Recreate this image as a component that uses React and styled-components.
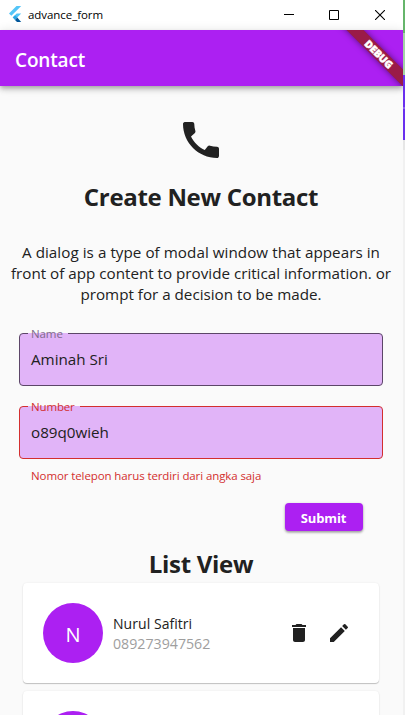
import React from "react";
import styled, { createGlobalStyle } from "styled-components";
import { MdCall, MdDelete, MdEdit } from "react-icons/md";

const GlobalStyle = createGlobalStyle`
  * { box-sizing: border-box; }
  html, body { margin: 0; padding: 0; overflow: hidden; }
  body { font-family: "Open Sans", "Noto Sans", sans-serif; color: #212121; }
`;

const purple = "#ac20f2";

const Screen = styled.div`
  display: flex;
  width: 405px;
  height: 715px;
  overflow: hidden;
`;

const Window = styled.main`
  flex: none;
  display: flex;
  flex-direction: column;
  width: 403px;
  height: 715px;
  overflow: hidden;
  background: #fafafa;
`;

const Backdrop = styled.div`
  flex: none;
  width: 2px;
  height: 715px;
  background: linear-gradient(
    #66b56b 0 33px,
    #a3d3a5 33px 75px,
    #6a30ee 75px 107px,
    #8d62f2 107px 109px,
    #6a30ee 109px 140px,
    #e6e6e6 140px 150px,
    #f1f1f1 150px
  );
`;

const TitleBar = styled.header`
  flex: none;
  display: flex;
  align-items: center;
  height: 30px;
  padding-left: 8px;
  background: #fff;
`;

const WindowTitle = styled.span`
  flex: 1;
  margin-left: 6px;
  font-size: 11.5px;
  line-height: 16px;
  letter-spacing: -0.06px;
  color: #000;
`;

const WindowControls = styled.div`
  display: flex;
  svg { display: block; margin-right: 35px; }
  svg:last-child { margin: 0 18px 0 1px; }
`;

const AppBar = styled.div`
  flex: none;
  position: relative;
  z-index: 1;
  display: flex;
  align-items: center;
  height: 56px;
  padding-left: 15px;
  background: ${purple};
  box-shadow: 0 2px 4px -1px rgba(0, 0, 0, 0.2), 0 4px 5px rgba(0, 0, 0, 0.14),
    0 1px 10px rgba(0, 0, 0, 0.12);
`;

const AppTitle = styled.h1`
  margin: 0;
  padding-top: 3px;
  font-size: 19px;
  font-weight: 600;
  line-height: 26px;
  letter-spacing: -0.15px;
  color: #fff;
`;

const BannerClip = styled.div`
  position: absolute;
  inset: 0 0 0 auto;
  width: 80px;
  overflow: hidden;
`;

const Banner = styled.div`
  position: absolute;
  left: -4px;
  top: 17.5px;
  width: 120px;
  height: 12px;
  transform: rotate(45deg);
  background: #9a1b48;
  box-shadow: 0 0 6px rgba(0, 0, 0, 0.5);
  color: #fff;
  font-size: 10.2px;
  font-weight: 800;
  line-height: 12px;
  text-align: center;
  -webkit-text-stroke: 0.5px #fff;
`;

const Content = styled.section`
  display: flex;
  flex-direction: column;
  width: 402px;
  padding-top: 30px;
`;

const HeroIcon = styled(MdCall)`
  align-self: center;
  flex: none;
  width: 48px;
  height: 48px;
  color: #212121;
`;

const Heading = styled.h2`
  flex: none;
  margin: 16px 0 0;
  font-size: 24px;
  font-weight: 700;
  line-height: 34px;
  letter-spacing: -0.3px;
  text-align: center;
`;

const Description = styled.p`
  margin: 28px 0 0;
  font-size: 15.2px;
  font-weight: 400;
  line-height: 21px;
  text-align: center;
  span { display: block; white-space: nowrap; }
  span:first-child { letter-spacing: 0.05px; }
`;

const Form = styled.form`
  display: flex;
  flex-direction: column;
  gap: 20px;
  margin: 28px 19px 0 19px;
`;

const Field = styled.div`
  position: relative;
  height: 53px;
  padding: 14px 11px;
  border: 1px solid ${(p) => (p.$error ? "#d32f2f" : "#5c4668")};
  border-radius: 4px;
  background: #e1b4f8;
`;

const FieldLabel = styled.label`
  position: absolute;
  left: 8px;
  top: -9px;
  padding: 0 5px 0 3px;
  font-size: 11.5px;
  line-height: 18px;
  letter-spacing: ${(p) => p.$track}px;
  color: ${(p) => (p.$error ? "#d32f2f" : "#806a8b")};
  isolation: isolate;
  &::before {
    content: "";
    position: absolute;
    z-index: -1;
    left: 0;
    right: 0;
    top: 8px;
    height: 1px;
    background: #e1b4f8;
  }
`;

const FieldValue = styled.div`
  font-size: 15.2px;
  font-weight: 400;
  line-height: 23px;
  color: #212121;
`;

const ErrorText = styled.div`
  margin: -11px 0 -1px 12px;
  font-size: 11.5px;
  line-height: 16px;
  letter-spacing: -0.1px;
  color: #d32f2f;
`;

const SubmitButton = styled.button`
  align-self: flex-end;
  width: 78px;
  height: 28px;
  margin-right: 20px;
  padding: 2px 1px 0 0;
  border: 0;
  border-radius: 4px;
  background: ${purple};
  box-shadow: 0 1px 3px rgba(0, 0, 0, 0.3), 0 2px 2px rgba(0, 0, 0, 0.14);
  color: #fff;
  font: 700 13px/26px "Open Sans", sans-serif;
  letter-spacing: -0.1px;
`;

const List = styled.ul`
  display: flex;
  flex-direction: column;
  gap: 8px;
  margin: 2px 23px 0 23px;
  padding: 0;
  list-style: none;
`;

const Card = styled.li`
  flex: none;
  display: flex;
  align-items: center;
  height: 100px;
  padding: 0 28px 0 20px;
  border-radius: 4px;
  background: #fff;
  box-shadow: 0 1px 1px rgba(0, 0, 0, 0.22), 0 0 2px rgba(0, 0, 0, 0.08);
`;

const Avatar = styled.div`
  width: 60px;
  height: 60px;
  padding-top: 2px;
  border-radius: 50%;
  background: ${purple};
  color: #fff;
  font-size: 20px;
  line-height: 60px;
  text-align: center;
`;

const Person = styled.div`
  flex: 1;
  margin-left: 10px;
  padding-top: 2px;
`;

const PersonName = styled.div`
  font-size: 14px;
  line-height: 20px;
  letter-spacing: 0.05px;
`;

const PersonPhone = styled.div`
  font-size: 14.2px;
  font-weight: 400;
  line-height: 20px;
  color: #9e9e9e;
`;

const CardActions = styled.div`
  display: flex;
  gap: 16px;
  svg { width: 24px; height: 24px; color: #212121; }
`;

function FlutterLogo() {
  return (
    <svg width="14" height="18" viewBox="0 0 14 18">
      <path d="M8.5 0H13.2L3.4 9.8 1 7.5z" fill="#54c5f8" />
      <path d="M8.7 7.6H13.2L9.2 11.6H4.7z" fill="#54c5f8" />
      <path d="M4.7 11.6l2.3-2.3L9.3 11.6 7 13.9z" fill="#29a5e5" />
      <path d="M7 13.9L9.3 11.6l3.9 4.4H9z" fill="#01579b" />
    </svg>
  );
}

function Contact({ initial, name, phone }) {
  return (
    <Card>
      <Avatar>{initial}</Avatar>
      <Person>
        <PersonName>{name}</PersonName>
        <PersonPhone>{phone}</PersonPhone>
      </Person>
      <CardActions>
        <MdDelete />
        <MdEdit />
      </CardActions>
    </Card>
  );
}

export default function App() {
  return (
    <Screen>
      <GlobalStyle />
      <Window>
        <TitleBar>
          <FlutterLogo />
          <WindowTitle>advance_form</WindowTitle>
          <WindowControls>
            <svg width="10" height="10"><path d="M0 4.5h10" stroke="#000" /></svg>
            <svg width="10" height="10"><path d="M.5.5h9v9h-9z" fill="none" stroke="#000" /></svg>
            <svg width="10" height="10"><path d="M0 0l10 10M10 0L0 10" stroke="#000" strokeWidth="1.1" /></svg>
          </WindowControls>
        </TitleBar>
        <AppBar>
          <AppTitle>Contact</AppTitle>
          <BannerClip><Banner>DEBUG</Banner></BannerClip>
        </AppBar>
        <Content>
          <HeroIcon />
          <Heading>Create New Contact</Heading>
          <Description>
            <span>A dialog is a type of modal window that appears in</span>
            <span>front of app content to provide critical information. or</span>
            <span>prompt for a decision to be made.</span>
          </Description>
          <Form>
            <Field>
              <FieldLabel $track={-0.1}>Name</FieldLabel>
              <FieldValue>Aminah Sri</FieldValue>
            </Field>
            <Field $error>
              <FieldLabel $error $track={-0.15}>Number</FieldLabel>
              <FieldValue>o89q0wieh</FieldValue>
            </Field>
            <ErrorText>Nomor telepon harus terdiri dari angka saja</ErrorText>
            <SubmitButton type="button">Submit</SubmitButton>
          </Form>
          <Heading>List View</Heading>
          <List>
            <Contact initial="N" name="Nurul Safitri" phone="089273947562" />
            <Contact />
          </List>
        </Content>
      </Window>
      <Backdrop />
    </Screen>
  );
}
